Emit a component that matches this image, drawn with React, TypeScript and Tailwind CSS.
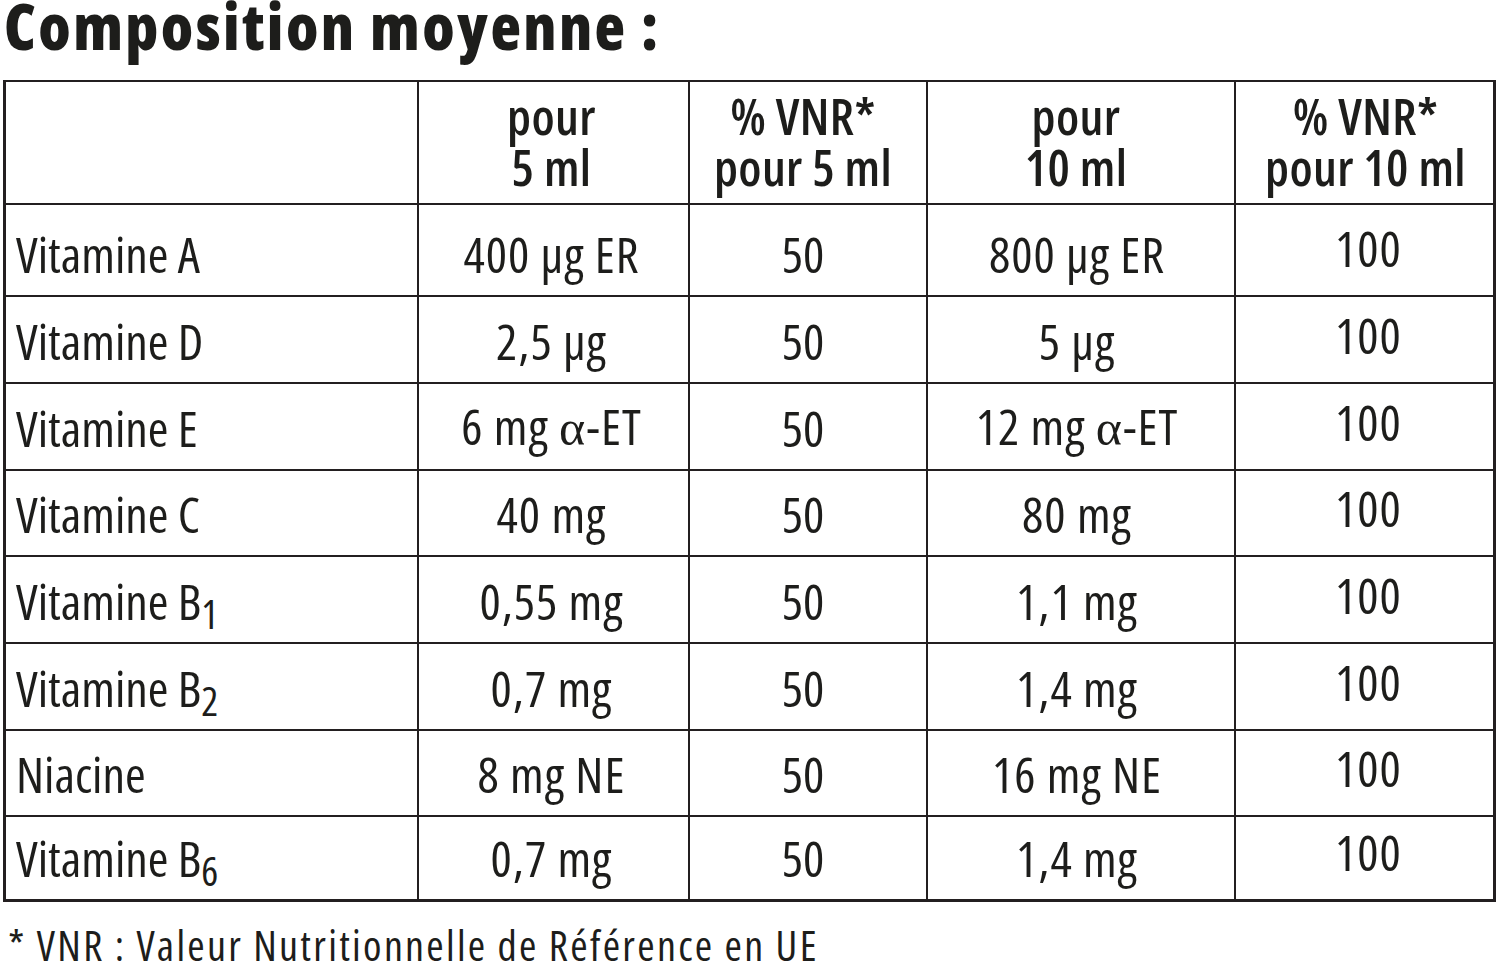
import React from 'react';

type Row = {
  name: React.ReactNode;
  q5: React.ReactNode;
  vnr5: string;
  q10: React.ReactNode;
  vnr10: string;
  h: string;
  last?: boolean;
};

const alpha = <span className="font-['Liberation_Serif',serif]">α</span>;
const Sub = ({ children }: { children: React.ReactNode }) => (
  <sub className="text-[0.8em] -bottom-[0.22em]">{children}</sub>
);

const rows: Row[] = [
  { name: 'Vitamine A', q5: '400 µg ER', vnr5: '50', q10: '800 µg ER', vnr10: '100', h: 'h-[92px]' },
  { name: 'Vitamine D', q5: '2,5 µg', vnr5: '50', q10: '5 µg', vnr10: '100', h: 'h-[87px]' },
  { name: 'Vitamine E', q5: <>6 mg {alpha}-ET</>, vnr5: '50', q10: <>12 mg {alpha}-ET</>, vnr10: '100', h: 'h-[87px]' },
  { name: 'Vitamine C', q5: '40 mg', vnr5: '50', q10: '80 mg', vnr10: '100', h: 'h-[86px]' },
  { name: <>Vitamine B<Sub>1</Sub></>, q5: '0,55 mg', vnr5: '50', q10: '1,1 mg', vnr10: '100', h: 'h-[87px]' },
  { name: <>Vitamine B<Sub>2</Sub></>, q5: '0,7 mg', vnr5: '50', q10: '1,4 mg', vnr10: '100', h: 'h-[87px]' },
  { name: 'Niacine', q5: '8 mg NE', vnr5: '50', q10: '16 mg NE', vnr10: '100', h: 'h-[86px]' },
  { name: <>Vitamine B<Sub>6</Sub></>, q5: '0,7 mg', vnr5: '50', q10: '1,4 mg', vnr10: '100', h: 'h-[82px]', last: true },
];

const cols = 'grid grid-cols-[413px_271px_238px_308px_257px]';
const font = "font-['Open_Sans','DejaVu_Sans_Condensed',sans-serif] [font-stretch:75%]";

export default function App() {
  return (
    <div className={`w-[1500px] h-[964px] bg-white text-[#1d1d1b] ${font} overflow-hidden`}>
      {/* titre */}
      <div className="h-[80px] pl-[4px] text-[63px] leading-[51px] font-extrabold tracking-[2.4px] whitespace-nowrap">Composition moyenne :</div>

      <div className="ml-[3px] w-[1493px] border-[#231f20] border-t-2 border-l-[3px] border-r-[3px] border-b-[3px]">
        {/* en-tête */}
        <div className={`${cols} h-[123px] border-b-2 border-[#231f20] text-[50px] leading-[51px] [font-weight:560] tracking-[0.4px]`}>
          <div className="border-r-2 border-[#231f20]" />
          <div className="border-r-2 border-[#231f20] flex flex-col items-center justify-end pb-[10px] pr-[4px]">
            <span>pour</span>
            <span>5 ml</span>
          </div>
          <div className="border-r-2 border-[#231f20] flex flex-col items-center justify-end pb-[10px] pr-[10px]">
            <span>% VNR*</span>
            <span>pour 5 ml</span>
          </div>
          <div className="border-r-2 border-[#231f20] flex flex-col items-center justify-end pb-[10px] pr-[10px]">
            <span>pour</span>
            <span>10 ml</span>
          </div>
          <div className="flex flex-col items-center justify-end pb-[10px] pl-[2px]">
            <span>% VNR*</span>
            <span>pour 10 ml</span>
          </div>
        </div>

        {rows.map((r, i) => (
          <div
            key={i}
            className={`${cols} ${r.h} ${r.last ? '' : 'border-b-2'} border-[#231f20] text-[50px] leading-[50px]`}
          >
            <div className="border-r-2 border-[#231f20] flex items-end pl-[10px] pb-[16px] whitespace-nowrap"><span>{r.name}</span></div>
            <div className="border-r-2 border-[#231f20] flex items-end justify-center pb-[16px] pr-[4px] whitespace-nowrap tracking-[1px]"><span>{r.q5}</span></div>
            <div className="border-r-2 border-[#231f20] flex items-end justify-center pb-[16px] pr-[10px]"><span>{r.vnr5}</span></div>
            <div className="border-r-2 border-[#231f20] flex items-end justify-center pb-[16px] pr-[8px] whitespace-nowrap tracking-[1px]"><span>{r.q10}</span></div>
            <div className="flex items-end justify-center pb-[22px] pl-[8px] tracking-[1px]"><span>{r.vnr10}</span></div>
          </div>
        ))}
      </div>

      <div className="mt-[22px] pl-[8px] text-[42px] leading-[42px] tracking-[2.3px] whitespace-nowrap">* VNR : Valeur Nutritionnelle de Référence en UE</div>
    </div>
  );
}
